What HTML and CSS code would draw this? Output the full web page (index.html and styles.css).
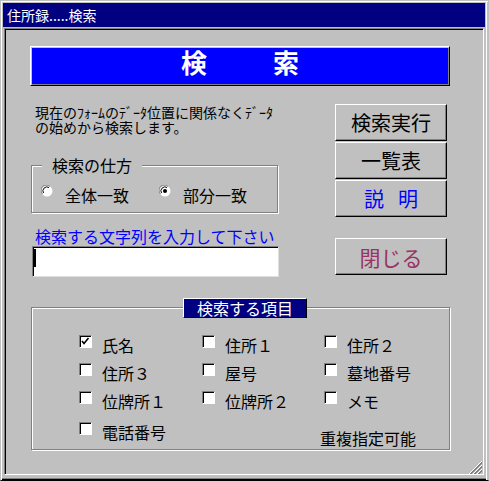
FILE: index.html
```html
<!DOCTYPE html>
<html lang="ja">
<head>
<meta charset="utf-8">
<title>住所録.....検索</title>
<link rel="stylesheet" href="styles.css">
</head>
<body>
<div class="window">
  <div class="titlebar">住所録.....検索</div>
  <div class="panel">
    <div class="banner"><span>検</span><span>索</span></div>
    <div class="middle">
      <div class="left">
        <div class="desc">
          <div class="desc-line">現在のﾌｫｰﾑのﾃﾞｰﾀ位置に関係なくﾃﾞｰﾀ</div>
          <div class="desc-line">の始めから検索します。</div>
        </div>
        <div class="group mode">
          <span class="legend">検索の仕方</span>
          <div class="radios">
            <div class="radio">
              <svg class="radio-icon" width="12" height="12" viewBox="0 0 12 12"><circle cx="6" cy="6" r="5.5" fill="#fff"/><path d="M1.5 9 A5 5 0 0 1 9 1.5" fill="none" stroke="#808080" stroke-width="1"/><path d="M2.5 8 A4 4 0 0 1 8 2.5" fill="none" stroke="#000" stroke-width="1"/></svg>
              <span>全体一致</span>
            </div>
            <div class="radio">
              <svg class="radio-icon" width="12" height="12" viewBox="0 0 12 12"><circle cx="6" cy="6" r="5.5" fill="#fff"/><path d="M1.5 9 A5 5 0 0 1 9 1.5" fill="none" stroke="#808080" stroke-width="1"/><path d="M2.5 8 A4 4 0 0 1 8 2.5" fill="none" stroke="#000" stroke-width="1"/><circle cx="6" cy="6" r="2" fill="#000"/></svg>
              <span>部分一致</span>
            </div>
          </div>
        </div>
        <div class="prompt">検索する文字列を入力して下さい</div>
        <div class="input"><span class="caret"></span></div>
      </div>
      <div class="buttons">
        <div class="btn">検索実行</div>
        <div class="btn">一覧表</div>
        <div class="btn blue"><span>説</span><span>明</span></div>
        <div class="btn close">閉じる</div>
      </div>
    </div>
    <div class="group items">
      <span class="legend-box">検索する項目</span>
      <div class="grid">
        <div class="item"><span class="check"><svg width="11" height="11" viewBox="0 0 11 11"><path d="M2 5 L4 7.5 L8.5 2" fill="none" stroke="#000" stroke-width="1.6"/></svg></span><span class="label">氏名</span></div>
        <div class="item"><span class="check"></span><span class="label">住所１</span></div>
        <div class="item"><span class="check"></span><span class="label">住所２</span></div>
        <div class="item"><span class="check"></span><span class="label">住所３</span></div>
        <div class="item"><span class="check"></span><span class="label">屋号</span></div>
        <div class="item"><span class="check"></span><span class="label">墓地番号</span></div>
        <div class="item"><span class="check"></span><span class="label">位牌所１</span></div>
        <div class="item"><span class="check"></span><span class="label">位牌所２</span></div>
        <div class="item"><span class="check"></span><span class="label">メモ</span></div>
        <div class="item"><span class="check"></span><span class="label">電話番号</span></div>
        <div class="note">重複指定可能</div>
      </div>
    </div>
  </div>
  <svg class="grip" width="15" height="15" viewBox="0 0 15 15" shape-rendering="crispEdges">
    <path d="M14 1 L1 14" stroke="#fff"/>
    <path d="M14 2 L2 14 M14 3 L3 14" stroke="#808080"/>
    <path d="M14 5 L5 14" stroke="#fff"/>
    <path d="M14 6 L6 14 M14 7 L7 14" stroke="#808080"/>
    <path d="M14 9 L9 14" stroke="#fff"/>
    <path d="M14 10 L10 14 M14 11 L11 14" stroke="#808080"/>
  </svg>
</div>
</body>
</html>
```

FILE: styles.css
```css
html, body {
  margin: 0;
  padding: 0;
  background: #c0c0c0;
  font-family: "Noto Sans CJK JP", "Noto Sans", sans-serif;
  color: #000;
}

.window {
  position: relative;
  width: 489px;
  height: 481px;
  box-sizing: border-box;
  display: flex;
  flex-direction: column;
  padding: 2px 3px 5px 2px;
  border: 1px solid #c0c0c0;
  border-bottom-color: #000;
  box-shadow: inset 1px 1px 0 #fff, inset -1px 0 0 #c0c0c0, inset -2px 0 0 #fff, inset 0 -1px 0 #000, inset 0 -2px 0 #808080;
}

.titlebar {
  height: 24px;
  flex: none;
  background: #000080;
  color: #fff;
  font-size: 14px;
  line-height: 24px;
  padding-left: 4px;
  margin-bottom: 1px;
  white-space: nowrap;
}

.panel {
  flex: 1;
  margin: 0 1px;
  box-sizing: border-box;
  border: 1px solid;
  border-color: #808080 #fff #fff #808080;
  box-shadow: inset 1px 1px 0 #000;
  padding: 17px 0 0 25px;
}

.banner {
  width: 420px;
  height: 40px;
  box-sizing: border-box;
  background: #0000ff;
  border: 1px solid;
  border-color: #fff #000 #000 #fff;
  box-shadow: inset 1px 1px 0 #c0c0c0, inset -1px -1px 0 #808080;
  display: flex;
  justify-content: center;
  align-items: center;
  gap: 66px;
  color: #fff;
  font-size: 26px;
  line-height: 26px;
  font-weight: bold;
  padding-bottom: 9px;
}

.middle {
  display: grid;
  grid-template-columns: 248px 112px;
  column-gap: 57px;
}

.desc {
  margin: 19px 0 0 5px;
  font-size: 14px;
  white-space: nowrap;
}

.desc-line {
  height: 15px;
  line-height: 15px;
}

.group {
  position: relative;
  box-sizing: border-box;
  border: 1px solid #808080;
  box-shadow: inset 1px 1px 0 #fff, 1px 1px 0 #fff;
}

.mode {
  margin: 30px 0 0 1px;
  width: 247px;
  height: 48px;
}

.legend {
  position: absolute;
  top: -9px;
  left: 10px;
  padding: 0 10px;
  background: #c0c0c0;
  font-size: 16px;
  line-height: 16px;
  white-space: nowrap;
}

.radios {
  display: flex;
  padding: 19px 0 0 9px;
}

.radio {
  display: flex;
  align-items: flex-start;
  width: 123px;
  gap: 12px;
  font-size: 16px;
  line-height: 16px;
}

.radio span {
  margin-top: 2px;
}

.radio-icon {
  display: block;
  flex: none;
}

.prompt {
  margin: 15px 0 0 5px;
  color: #0000ff;
  font-size: 16px;
  line-height: 16px;
  white-space: nowrap;
}

.input {
  margin: 2px 0 0 2px;
  width: 247px;
  height: 31px;
  box-sizing: border-box;
  background: #fff;
  border: 1px solid;
  border-color: #808080 #dfdfdf #dfdfdf #808080;
  box-shadow: inset 1px 1px 0 #000;
}

.caret {
  display: block;
  width: 3px;
  height: 18px;
  margin-top: 2px;
  background: #000;
}

.buttons {
  margin-top: 18px;
  display: flex;
  flex-direction: column;
  gap: 1px;
}

.btn {
  height: 37px;
  box-sizing: border-box;
  border: 1px solid;
  border-color: #fff #000 #000 #fff;
  box-shadow: inset -1px -1px 0 #808080;
  display: flex;
  align-items: center;
  justify-content: center;
  font-size: 20px;
  line-height: 20px;
  white-space: nowrap;
}

.btn.blue {
  color: #0000ff;
  gap: 14px;
}

.btn.close {
  margin-top: 20px;
  color: #993366;
  font-size: 21px;
}

.items {
  margin: 30px 0 0 1px;
  width: 419px;
  height: 143px;
}

.legend-box {
  position: absolute;
  top: -10px;
  left: 151px;
  padding: 0 13px;
  background: #000080;
  color: #fff;
  border: 1px solid;
  border-color: #fff #000 #000 #fff;
  font-size: 16px;
  line-height: 18px;
  white-space: nowrap;
}

.grid {
  display: grid;
  grid-template-columns: 123px 122px auto;
  grid-template-rows: 28px 28px 31px auto;
  padding: 27px 0 0 47px;
}

.item {
  display: flex;
  align-items: flex-start;
  gap: 10px;
}

.check {
  flex: none;
  width: 13px;
  height: 13px;
  box-sizing: border-box;
  background: #fff;
  border: 1px solid;
  border-color: #808080 #fff #fff #808080;
  box-shadow: inset 1px 1px 0 #000;
  display: flex;
  align-items: center;
  justify-content: center;
}

.check svg {
  display: block;
}

.label {
  margin-top: 2px;
  font-size: 16px;
  line-height: 16px;
  white-space: nowrap;
}

.note {
  grid-column: 3;
  grid-row: 4;
  margin: 8px 0 0 -4px;
  font-size: 16px;
  line-height: 16px;
  white-space: nowrap;
}

.grip {
  position: absolute;
  left: 467px;
  top: 459px;
}
```
